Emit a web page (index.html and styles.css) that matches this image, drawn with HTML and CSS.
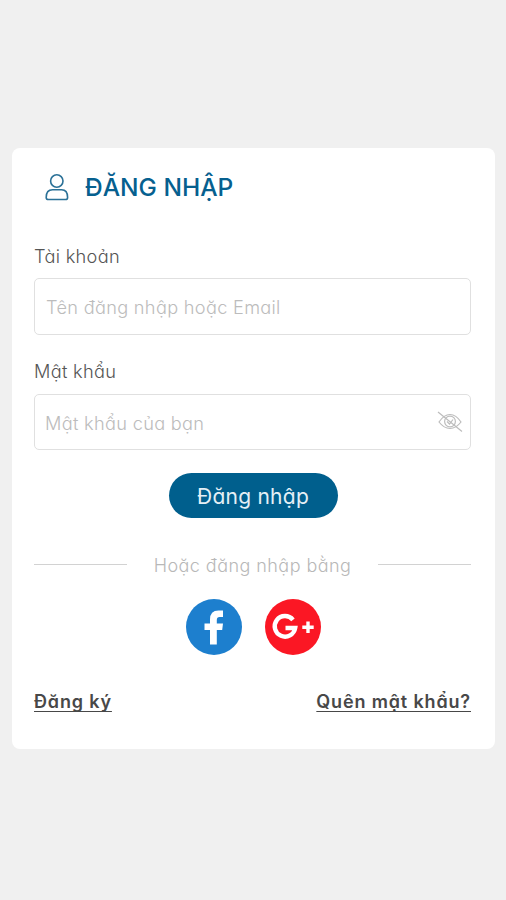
FILE: index.html
```html
<!DOCTYPE html>
<html lang="vi">
<head>
<meta charset="utf-8">
<title>Đăng nhập</title>
<link rel="stylesheet" href="styles.css">
</head>
<body>
<main class="card">
  <header class="heading">
    <svg class="user-icon" viewBox="0 0 26 28" aria-hidden="true">
      <circle cx="12.8" cy="8" r="6.2"/>
      <path d="M4.5 26.5H21.5Q23.6 26.5 23.6 24.4Q23.6 16.8 17.5 16.8H8.5Q2.2 16.8 2.2 24.4Q2.2 26.5 4.5 26.5Z"/>
    </svg>
    <h1 class="title"><span>ĐĂNG NHẬP</span></h1>
  </header>
  <form class="form">
    <label class="label label-user" for="user"><span>Tài khoản</span></label>
    <div class="field" id="user"><span class="placeholder ph-user">Tên đăng nhập hoặc Email</span></div>
    <label class="label label-pass" for="pass"><span>Mật khẩu</span></label>
    <div class="field" id="pass">
      <span class="placeholder ph-pass">Mật khẩu của bạn</span>
      <svg class="eye-icon" viewBox="0 0 26 22" aria-hidden="true">
        <path d="M2 11Q7 3.5 13 3.5T24 11Q19 17.5 13 17.5T2 11Z"/>
        <circle cx="13" cy="10.5" r="5.4"/>
        <path d="M10 10.5L12.5 13L16 8.5M1 1L25 20.5"/>
      </svg>
    </div>
    <button class="submit" type="button"><span>Đăng nhập</span></button>
  </form>
  <div class="divider"><span>Hoặc đăng nhập bằng</span></div>
  <div class="social">
    <svg class="social-icon" viewBox="0 0 56 56" role="img" aria-label="Facebook">
      <circle class="facebook" cx="28" cy="28" r="28"/>
      <path class="mark" d="M24 45.5V31H18.5V24.5H24V20.5Q24 11.5 32.5 11.5H37V18H33.5Q30.8 18 30.8 21V24.5H37L36.2 31H30.8V45.5Z"/>
    </svg>
    <svg class="social-icon" viewBox="0 0 56 56" role="img" aria-label="Google Plus">
      <circle class="google" cx="28" cy="28" r="28"/>
      <path class="ring" d="M28 20.8A10.3 10.3 0 1 0 30.2 29H20.5"/>
      <path class="plus" d="M43 22.5V34M37.3 28.2H48.7"/>
    </svg>
  </div>
  <nav class="links">
    <a class="link link-join">Đăng ký</a>
    <a class="link link-forgot">Quên mật khẩu?</a>
  </nav>
</main>
</body>
</html>
```
FILE: styles.css
```css
* { box-sizing: border-box; }
body {
  margin: 0;
  padding: 148px 11px 0 12px;
  height: 900px;
  background: #f0f0f0;
  font-family: Inter, "Noto Sans", sans-serif;
  font-feature-settings: "cv11";
}
.card {
  height: 601px;
  padding: 22px 24px 0 22px;
  border-radius: 8px;
  background: #fff;
}
.heading { display: flex; align-items: center; height: 34px; padding-left: 10px; }
.user-icon { width: 26px; height: 28px; margin-top: -1px; fill: none; stroke: #2b7197; stroke-width: 1.6; }
.title { margin: 0 0 0 15px; font-size: 24.5px; font-weight: 500; line-height: 34px; color: #06608f; white-space: nowrap; }
.form { display: flex; flex-direction: column; }
.label { height: 26px; margin-top: 39px; font-size: 18.2px; letter-spacing: .3px; line-height: 26px; color: #555; font-weight: 300; white-space: nowrap; }
.field {
  display: flex;
  align-items: center;
  justify-content: space-between;
  height: 57px;
  margin-top: 9px;
  padding: 0 7px 0 11px;
  border: 1.5px solid #e0e0e0;
  border-radius: 5px;
}
.label-pass { margin-top: 23px; }
#pass { height: 56px; margin-top: 10px; }
.placeholder { padding-top: 1px; font-size: 18.2px; letter-spacing: .3px; font-weight: 300; line-height: 26px; color: #bcbcbc; white-space: nowrap; }
.ph-pass { margin-left: -1px; padding-top: 2px; }
.eye-icon { width: 26px; height: 22px; fill: none; stroke: #bdbdbd; stroke-width: 1.2; }
.submit {
  align-self: center;
  width: 169px;
  height: 45px;
  margin: 23px 0 0 1px;
  padding: 2px 0 0;
  border: 0;
  border-radius: 23px;
  background: #005f8d;
  color: #e5f0f6;
  font: inherit;
  font-size: 21px;
  letter-spacing: .25px;
  line-height: 43px;
  white-space: nowrap;
}
.divider { display: flex; align-items: center; justify-content: space-between; height: 28px; margin-top: 32px; font-size: 18px; letter-spacing: .45px; font-weight: 300; color: #b8b8b8; white-space: nowrap; }
.divider::before, .divider::after { content: ""; width: 93px; height: 1px; background: #d2d2d2; }
.divider span { padding-top: 2px; }
.social { display: flex; justify-content: center; gap: 23px; margin: 21px 0 0 2px; }
.social-icon { width: 56px; height: 56px; }
.facebook { fill: #1d7fce; }
.google { fill: #fb1724; }
.mark { fill: #fff; }
.ring { fill: none; stroke: #fff; stroke-width: 4.4; }
.plus { fill: none; stroke: #fff; stroke-width: 3.4; }
.links { display: flex; justify-content: space-between; margin-top: 33px; font-size: 18px; letter-spacing: .85px; font-weight: 600; line-height: 28px; color: #484848; white-space: nowrap; }
.link { text-decoration: underline; text-decoration-thickness: 1px; text-underline-offset: 3px; text-decoration-skip-ink: none; }
```
